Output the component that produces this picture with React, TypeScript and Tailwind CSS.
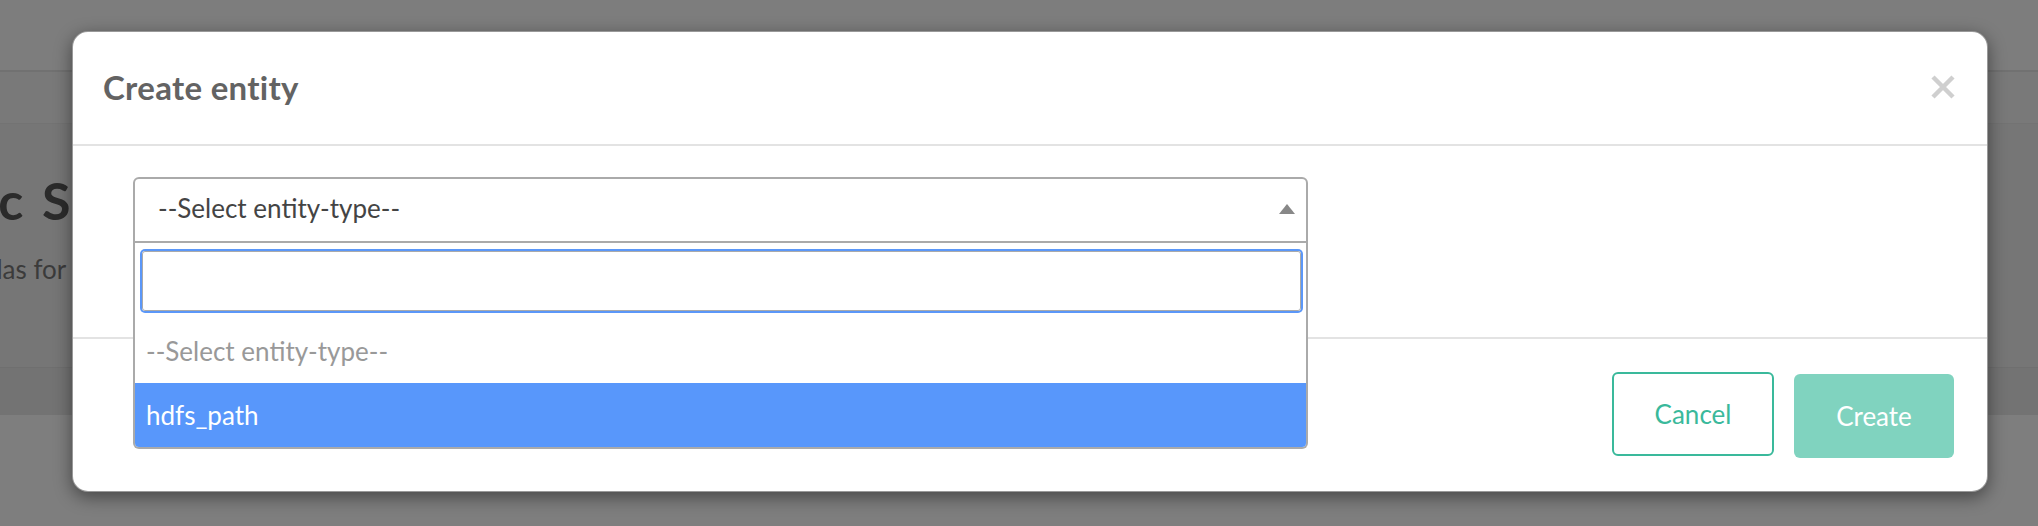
import React from "react";

export default function App() {
  const font = { fontFamily: "Lato, 'Noto Sans', sans-serif" };
  return (
    <div className="relative w-[2038px] h-[526px] overflow-hidden bg-[#7b7b7b]" style={font}>
      {/* page behind overlay */}
      <div className="flex flex-col w-full h-full">
        <div className="h-[70px] bg-[#7d7d7d]" />
        <div className="h-[2px] bg-[#717171]" />
        <div className="h-[52px] bg-[#797979] border-b border-[#737373]" />
        <div className="h-[243px] bg-[#767676] flex flex-col">
          <div className="-ml-[110px] mt-[46px] text-[52px] leading-[60px] font-bold tracking-[3px] text-[#2b2b2b] whitespace-nowrap">Basic Search</div>
          <div className="-ml-[112px] mt-[24px] text-[26px] leading-[30px] text-[#3b3b3b] whitespace-nowrap">Search Atlas for existing entities</div>
        </div>
        <div className="h-[48px] bg-[#737373] border-t border-[#6f6f6f]" />
        <div className="flex-1 bg-[#7e7e7e]" />
      </div>

      {/* modal overlay */}
      <div className="absolute inset-0 pt-[31px] pl-[72px] pr-[50px]">
        <div className="w-full bg-white rounded-[16px] border border-black/40 shadow-[0_5px_18px_rgba(0,0,0,0.45)]">
          <div className="h-[114px] flex items-center justify-between pl-[30px] pr-[32px] border-b-2 border-[#e3e3e3]">
            <h4 className="text-[33px] font-bold text-[#636363] tracking-[0.3px]">Create entity</h4>
            <svg width="24" height="24" viewBox="0 0 24 24" className="mt-[-2px]">
              <path d="M2 2 L22 22 M22 2 L2 22" stroke="#cfcfcf" strokeWidth="4.5" />
            </svg>
          </div>
          <div className="h-[191px] pt-[31px] pl-[60px]">
            <div className="relative w-[1175px]">
              <div className="h-[66px] border-2 border-[#aaaaaa] rounded-t-[6px] flex items-center justify-between pl-[23px] pr-[11px]">
                <span className="text-[26px] text-[#444] mt-[-4px]">--Select entity-type--</span>
                <svg width="16" height="10" viewBox="0 0 16 10" className="mt-[-3px]">
                  <path d="M0 10 L8 0 L16 10 Z" fill="#888" />
                </svg>
              </div>
              <div className="absolute top-full left-0 right-0 z-10 bg-white border-2 border-t-0 border-[#aaaaaa] rounded-b-[6px] overflow-hidden">
                <div className="p-[8px] pl-[7px] pr-[5px]">
                  <div className="h-[60px] rounded-[3px] border border-[#aaa] shadow-[0_0_0_2px_#5b97f8]" />
                </div>
                <div className="h-[64px] flex items-center pl-[11px] text-[26px] text-[#999]">--Select entity-type--</div>
                <div className="h-[64px] flex items-center pl-[11px] text-[26px] text-white bg-[#5897fb]">hdfs_path</div>
              </div>
            </div>
          </div>
          <div className="border-t-2 border-[#e3e3e3] flex justify-end gap-[20px] pt-[33px] pb-[33px] pr-[33px]">
            <button className="w-[162px] h-[84px] rounded-[6px] border-2 border-[#3ab99b] text-[#3ab99b] text-[26px] bg-white">Cancel</button>
            <button className="w-[160px] h-[84px] rounded-[6px] bg-[#80d3bf] text-white text-[26px] mt-[2px]">Create</button>
          </div>
        </div>
      </div>
    </div>
  );
}
